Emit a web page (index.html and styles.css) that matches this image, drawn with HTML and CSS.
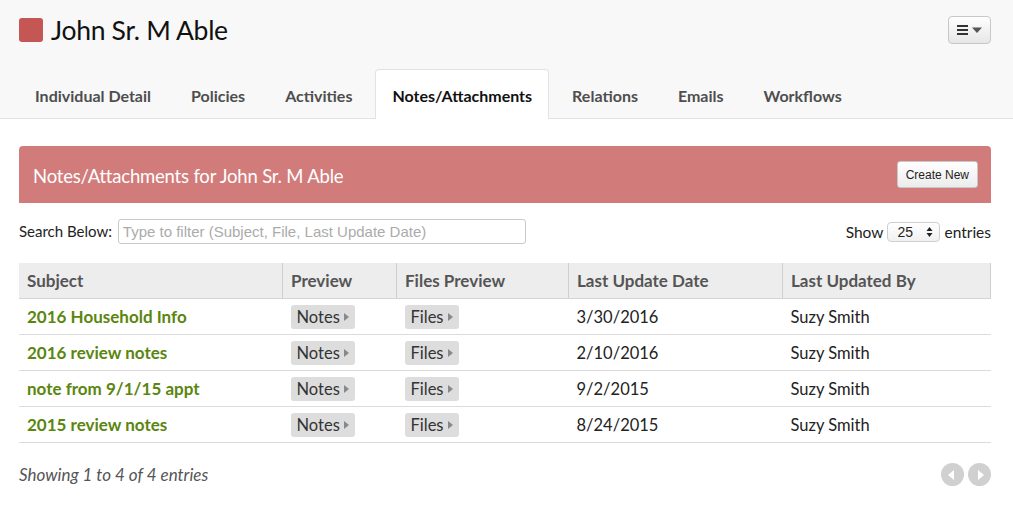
FILE: index.html
```html
<!DOCTYPE html>
<html lang="en">
<head>
    <meta charset="UTF-8"/>
    <title>John Sr. M Able - Notes/Attachments</title>
    <link rel="stylesheet" href="styles.css">
</head>
<body>
<div class="top">
    <div class="title-row">
        <h1 class="title"><span class="badge"></span>John Sr. M Able</h1>
        <button class="menu-btn" type="button">
            <svg width="26" height="12" viewBox="0 0 26 12">
                <rect x="0" y="1" width="11" height="2" fill="#333"/>
                <rect x="0" y="5" width="11" height="2" fill="#333"/>
                <rect x="0" y="9" width="11" height="2" fill="#333"/>
                <path d="M15 3.5 L25 3.5 L20 9 Z" fill="#555"/>
            </svg>
        </button>
    </div>
    <ul class="tabs">
        <li>Individual Detail</li>
        <li>Policies</li>
        <li>Activities</li>
        <li class="active">Notes/Attachments</li>
        <li>Relations</li>
        <li>Emails</li>
        <li>Workflows</li>
    </ul>
</div>

<div class="content">
    <div class="panel-head">
        <span>Notes/Attachments for John Sr. M Able</span>
        <button class="create-btn" type="button">Create New</button>
    </div>

    <div class="filter-row">
        <label class="search">Search Below:
            <input type="text" placeholder="Type to filter (Subject, File, Last Update Date)"/>
        </label>
        <div class="show">
            Show
            <span class="select">25
                <svg width="7" height="12" viewBox="0 0 7 12">
                    <path d="M3.5 1 L6.5 5 L0.5 5 Z" fill="#222"/>
                    <path d="M3.5 11 L6.5 7 L0.5 7 Z" fill="#222"/>
                </svg>
            </span>
            entries
        </div>
    </div>

    <table class="notes">
        <thead>
        <tr>
            <th class="c-subject">Subject</th>
            <th class="c-preview">Preview</th>
            <th class="c-files">Files Preview</th>
            <th class="c-date">Last Update Date</th>
            <th>Last Updated By</th>
        </tr>
        </thead>
        <tbody>
        <tr>
            <td class="subject">2016 Household Info</td>
            <td><span class="pill">Notes<i></i></span></td>
            <td><span class="pill">Files<i></i></span></td>
            <td>3/30/2016</td>
            <td>Suzy Smith</td>
        </tr>
        <tr>
            <td class="subject">2016 review notes</td>
            <td><span class="pill">Notes<i></i></span></td>
            <td><span class="pill">Files<i></i></span></td>
            <td>2/10/2016</td>
            <td>Suzy Smith</td>
        </tr>
        <tr>
            <td class="subject">note from 9/1/15 appt</td>
            <td><span class="pill">Notes<i></i></span></td>
            <td><span class="pill">Files<i></i></span></td>
            <td>9/2/2015</td>
            <td>Suzy Smith</td>
        </tr>
        <tr>
            <td class="subject">2015 review notes</td>
            <td><span class="pill">Notes<i></i></span></td>
            <td><span class="pill">Files<i></i></span></td>
            <td>8/24/2015</td>
            <td>Suzy Smith</td>
        </tr>
        </tbody>
    </table>

    <div class="table-foot">
        <span class="info">Showing 1 to 4 of 4 entries</span>
        <div class="pager">
            <span class="prev"></span>
            <span class="next"></span>
        </div>
    </div>
</div>
</body>
</html>
```

FILE: styles.css
```css
body {
    margin: 0;
    background-color: #fff;
    font-family: Lato, "Open Sans", sans-serif;
    color: #222;
}

.top {
    background-color: #f8f8f8;
    border-bottom: 1px solid #e2e2e2;
    padding: 16px 22px 0 19px;
}

.title-row {
    display: flex;
    justify-content: space-between;
    align-items: center;
    height: 28px;
}

.title {
    display: flex;
    align-items: center;
    margin: 0;
    font-size: 26.5px;
    font-weight: normal;
    color: #111;
    letter-spacing: -0.3px;
}

.badge {
    width: 24px;
    height: 24px;
    border-radius: 3px;
    background-color: #c45653;
    margin-right: 8px;
}

.menu-btn {
    width: 43px;
    height: 28px;
    padding: 0;
    display: flex;
    align-items: center;
    justify-content: center;
    border: 1px solid #c8c8c8;
    border-radius: 4px;
    background: linear-gradient(#fff, #e6e6e6);
}

.tabs {
    display: flex;
    list-style: none;
    margin: 25px 0 0 0;
    padding: 0;
}

.tabs li {
    padding: 16px 16px 12px;
    margin-right: 6px;
    line-height: 20px;
    font-size: 16px;
    font-weight: bold;
    color: #4e4e4e;
    border: 1px solid transparent;
    border-bottom: none;
    margin-bottom: -1px;
}

.tabs li:first-child {
    padding-left: 15px;
}

.tabs li.active {
    background-color: #fff;
    border-color: #e2e2e2;
    border-radius: 4px 4px 0 0;
    color: #111;
    padding-bottom: 13px;
}

.content {
    padding: 27px 22px 0 19px;
}

.panel-head {
    display: flex;
    justify-content: space-between;
    align-items: center;
    height: 57px;
    padding: 0 13px 0 14px;
    background-color: #d17c7b;
    border-radius: 4px 4px 0 0;
    color: #fff;
    font-size: 18.5px;
    letter-spacing: -0.2px;
}

.panel-head span {
    padding-top: 3px;
}

.create-btn {
    height: 27px;
    padding: 0 8px;
    font-family: "Liberation Sans", Arial, sans-serif;
    font-size: 12px;
    color: #222;
    border: 1px solid #c8c8c8;
    border-radius: 3px;
    background: linear-gradient(#fff, #ececec);
}

.filter-row {
    display: flex;
    justify-content: space-between;
    align-items: center;
    margin-top: 16px;
    height: 25px;
    font-size: 15.5px;
}

.search {
    font-size: 15px;
}

.search input {
    width: 398px;
    height: 23px;
    margin-left: 2px;
    padding: 0 4px;
    border: 1px solid #c9c9c9;
    border-radius: 3px;
    font-family: "Liberation Sans", Arial, sans-serif;
    font-size: 15px;
    color: #333;
}

.search input::placeholder {
    color: #ababab;
}

.show {
    display: flex;
    align-items: center;
    gap: 4px;
}

.select {
    display: inline-flex;
    justify-content: space-between;
    align-items: center;
    width: 36px;
    height: 18px;
    padding: 0 6px 0 9px;
    border: 1px solid #cfcfcf;
    border-radius: 4px;
    background: linear-gradient(#fff, #f1f1f1);
    font-family: "Liberation Sans", Arial, sans-serif;
    font-size: 14px;
}

.notes {
    width: 100%;
    margin-top: 19px;
    border-collapse: collapse;
    font-size: 16.5px;
}

.notes th {
    height: 35px;
    padding: 0 8px;
    text-align: left;
    background-color: #ededed;
    color: #555;
    font-size: 17px;
    border-left: 1px solid #cfcfcf;
    border-bottom: 1px solid #d4d4d4;
}

.notes th:first-child {
    border-left: none;
}

.notes th:last-child {
    border-right: 1px solid #cfcfcf;
}

.c-subject { width: 247px; }
.c-preview { width: 97px; }
.c-files { width: 155px; }
.c-date { width: 197px; }

.notes td {
    height: 35px;
    padding: 0 8px;
    border-bottom: 1px solid #dcdcdc;
    color: #222;
}

.notes td.subject {
    font-weight: bold;
    font-size: 17px;
    color: #5a860e;
}

.pill {
    display: inline-flex;
    align-items: center;
    height: 24px;
    padding: 0 6px;
    border-radius: 3px;
    background-color: #dddddd;
    color: #333;
}

.pill i {
    width: 0;
    height: 0;
    margin-left: 4px;
    border-top: 4px solid transparent;
    border-bottom: 4px solid transparent;
    border-left: 5px solid #888;
}

.table-foot {
    display: flex;
    justify-content: space-between;
    align-items: center;
    margin-top: 20px;
}

.info {
    font-style: italic;
    font-size: 17px;
    color: #555;
}

.pager {
    display: flex;
    gap: 4px;
}

.pager span {
    position: relative;
    width: 23px;
    height: 23px;
    border-radius: 50%;
    background-color: #d0d0d0;
}

.pager span::after {
    content: "";
    position: absolute;
    top: 7px;
    border-top: 5px solid transparent;
    border-bottom: 5px solid transparent;
}

.pager .prev::after {
    left: 7px;
    border-right: 6px solid #fff;
}

.pager .next::after {
    left: 10px;
    border-left: 6px solid #fff;
}
```
